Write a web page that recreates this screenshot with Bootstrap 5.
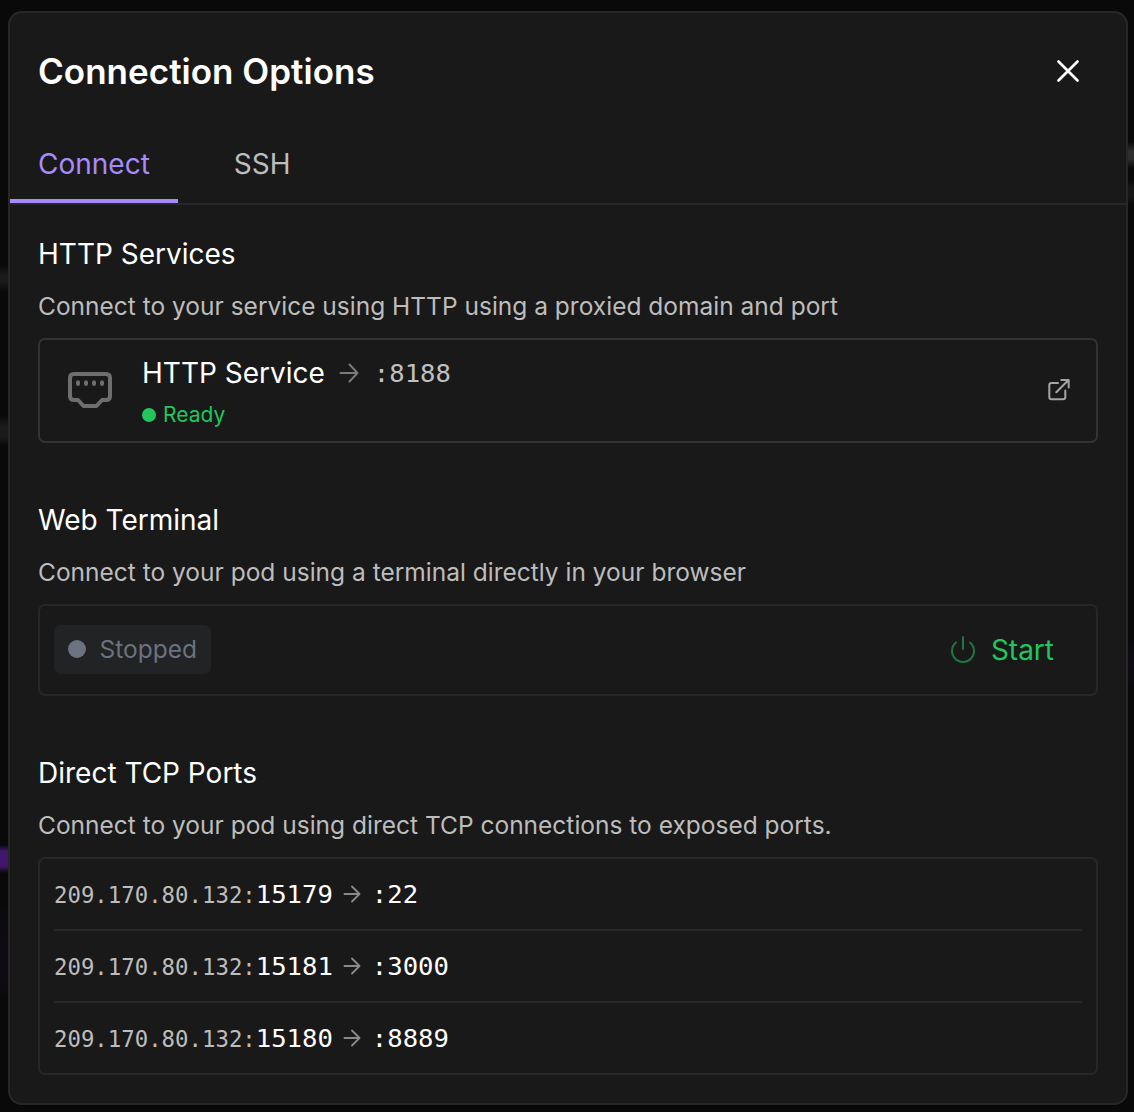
<!DOCTYPE html>
<html lang="en">
<head>
<meta charset="utf-8">
<meta name="viewport" content="width=device-width, initial-scale=1">
<title>Connection Options</title>
<link href="https://cdn.jsdelivr.net/npm/bootstrap@5.3.0/dist/css/bootstrap.min.css" rel="stylesheet">
<style>
body{margin:0;height:1112px;overflow:hidden;padding:11px 6px 7px 8px;font-family:Inter,sans-serif;color:#fff;
background:
linear-gradient(transparent 265px,#1b1b1b 276px,#1b1b1b 281px,transparent 292px,transparent 415px,#1b1b1b 426px,#1b1b1b 436px,transparent 446px,transparent 845px,#42166a 851px,#42166a 866px,transparent 873px,transparent 900px,#0e0b12 940px,#0e0b12 980px,transparent 1000px) 0 0/8px 100% no-repeat,
linear-gradient(transparent 142px,#2e2e30 151px,#2e2e30 159px,transparent 168px,transparent 180px,#171717 188px,#171717 196px,transparent 206px,transparent 640px,#100c15 660px,transparent 690px) 100% 0/6px 100% no-repeat,#090909}
.panel{height:1094px;border:2px solid #272727;border-radius:14px;background:#191919}
.panel-head{height:117px;padding:0 46px 2px 28px}
.panel-title{font-size:35px;line-height:42px;font-weight:600;letter-spacing:.02px}
.close-btn{line-height:0;color:#fff}
.tab-row{height:75px;gap:28px;border-bottom:2px solid #272727}
.tab-row .nav-link{height:73px;padding:13px 28px 0;font-size:28px;line-height:42px;color:#bdbdbd;border-radius:0;border-bottom:4px solid transparent}
.tab-row .nav-link.active{color:#a78bfa;border-color:#a78bfa}
.sections{padding:28px;gap:56px}
.sec-title{font-size:28px;line-height:42px;font-weight:400;margin:0 0 14px}
.sec-text{font-size:24.5px;line-height:35px;color:#bdbdbd;margin:0 0 14px;white-space:nowrap}
.box{border:2px solid #272727;border-radius:7px}
.service{height:105px;border-color:#333;padding:0 26px 0 28px}
.svc-info{margin-left:30px}
.svc-name{font-size:28px;line-height:42px}
.svc-arrow{margin:0 15px 0 14px}
.mono{font-family:"DejaVu Sans Mono",monospace;font-size:25.6px}
.muted{color:#c0c0c0}
.ready{margin-top:7px;font-size:21px;line-height:28px;color:#22c55e;gap:7px}
.ready i{width:14px;height:14px;border-radius:50%;background:#22c55e}
.open-icon{margin-bottom:2px}
.terminal{height:92px;padding:0 42px 0 14px}
.stopped{height:49px;width:157px;margin-bottom:2px;padding-left:14px;gap:13.5px;border-radius:7px;background:#212325;color:#6b7280;font-size:24.5px}
.stopped i{width:18px;height:18px;border-radius:50%;background:#6b7280}
.stopped span{padding-top:1px}
.start{gap:15px;color:#22c55e;font-size:28px;line-height:42px}
.start svg{margin-bottom:2px;opacity:.55}
.ports{height:218px;padding:0 14px}
.port-row{height:72px;white-space:nowrap}
.port-row:first-child{height:70px}
.port-row+.port-row{border-top:2px solid #272727}
.port-arrow{margin:0 11px 0 10px}
.ip{font-size:22.35px;color:#bdbdbd}
</style>
</head>
<body>
<main class="panel d-flex flex-column">
  <header class="panel-head d-flex align-items-center justify-content-between">
    <h1 class="panel-title mb-0">Connection Options</h1>
    <button class="close-btn btn p-0 border-0" aria-label="Close"><svg width="24" height="24" viewBox="0 0 24 24" fill="none" stroke="#fff" stroke-width="2.7" stroke-linecap="round"><path d="M2.5 2.5l19 19M21.5 2.5l-19 19"/></svg></button>
  </header>
  <nav class="tab-row nav flex-nowrap">
    <a class="nav-link active" href="#">Connect</a>
    <a class="nav-link" href="#">SSH</a>
  </nav>
  <div class="sections d-flex flex-column">
    <section>
      <h2 class="sec-title">HTTP Services</h2>
      <p class="sec-text">Connect to your service using HTTP using a proxied domain and port</p>
      <div class="box service d-flex align-items-center">
        <svg class="flex-shrink-0" width="44" height="37" viewBox="0 0 44 37" fill="none" stroke="#6e6e6e"><path stroke-width="4" stroke-linejoin="round" d="M6 2H38Q42 2 42 6V24Q42 28 38 28H34L28.5 34H15.5L10 28H6Q2 28 2 24V6Q2 2 6 2Z"/><path stroke-width="4" stroke-linecap="round" d="M10 10.3v1.8M18 10.3v1.8M26 10.3v1.8M34 10.3v1.8"/></svg>
        <div class="svc-info">
          <div class="d-flex align-items-center">
            <span class="svc-name">HTTP Service</span>
            <svg class="svc-arrow" width="20" height="20" viewBox="0 0 20 20" fill="none" stroke="#7b7b7b" stroke-width="1.9" stroke-linecap="round" stroke-linejoin="round"><path d="M1.500 10H18.500M10.500 1.500L18.500 10l-8 8.500"/></svg>
            <span class="mono muted">:8188</span>
          </div>
          <div class="ready d-flex align-items-center"><i></i><span>Ready</span></div>
        </div>
        <svg class="open-icon ms-auto" width="22" height="22" viewBox="0 0 22 22" fill="none" stroke="#a5a5a5" stroke-width="2" stroke-linecap="round" stroke-linejoin="round"><path d="M10 4H3.5Q1.3 4 1.3 6.200V18Q1.300 20.300 3.500 20.300H15Q17.300 20.300 17.300 18V11.500M8.300 13.200L20.500 1M13.300 1H20.700V8.500"/></svg>
      </div>
    </section>
    <section>
      <h2 class="sec-title">Web Terminal</h2>
      <p class="sec-text">Connect to your pod using a terminal directly in your browser</p>
      <div class="box terminal d-flex align-items-center justify-content-between">
        <div class="stopped d-flex align-items-center"><i></i><span>Stopped</span></div>
        <button class="start btn p-0 border-0 d-flex align-items-center"><svg width="26" height="28" viewBox="0 0 26 28" fill="none" stroke="#22c55e" stroke-width="2" stroke-linecap="round"><path d="M13 2V14M6 7.500A11 11 0 1 0 20 7.500"/></svg><span>Start</span></button>
      </div>
    </section>
    <section>
      <h2 class="sec-title">Direct TCP Ports</h2>
      <p class="sec-text">Connect to your pod using direct TCP connections to exposed ports.</p>
      <div class="box ports">
        <div class="port-row d-flex align-items-center"><span class="mono"><span class="ip">209.170.80.132:</span>15179</span><svg class="port-arrow" width="18" height="18" viewBox="0 0 18 18" fill="none" stroke="#8a8a8a" stroke-width="1.8" stroke-linecap="round" stroke-linejoin="round"><path d="M1.500 9H16.500M9 1.500L16.500 9 9 16.500"/></svg><span class="mono">:22</span></div>
        <div class="port-row d-flex align-items-center"><span class="mono"><span class="ip">209.170.80.132:</span>15181</span><svg class="port-arrow" width="18" height="18" viewBox="0 0 18 18" fill="none" stroke="#8a8a8a" stroke-width="1.8" stroke-linecap="round" stroke-linejoin="round"><path d="M1.500 9H16.500M9 1.500L16.500 9 9 16.500"/></svg><span class="mono">:3000</span></div>
        <div class="port-row d-flex align-items-center"><span class="mono"><span class="ip">209.170.80.132:</span>15180</span><svg class="port-arrow" width="18" height="18" viewBox="0 0 18 18" fill="none" stroke="#8a8a8a" stroke-width="1.8" stroke-linecap="round" stroke-linejoin="round"><path d="M1.500 9H16.500M9 1.500L16.500 9 9 16.500"/></svg><span class="mono">:8889</span></div>
      </div>
    </section>
  </div>
</main>
<script src="https://cdn.jsdelivr.net/npm/bootstrap@5.3.0/dist/js/bootstrap.bundle.min.js"></script>
</body>
</html>
